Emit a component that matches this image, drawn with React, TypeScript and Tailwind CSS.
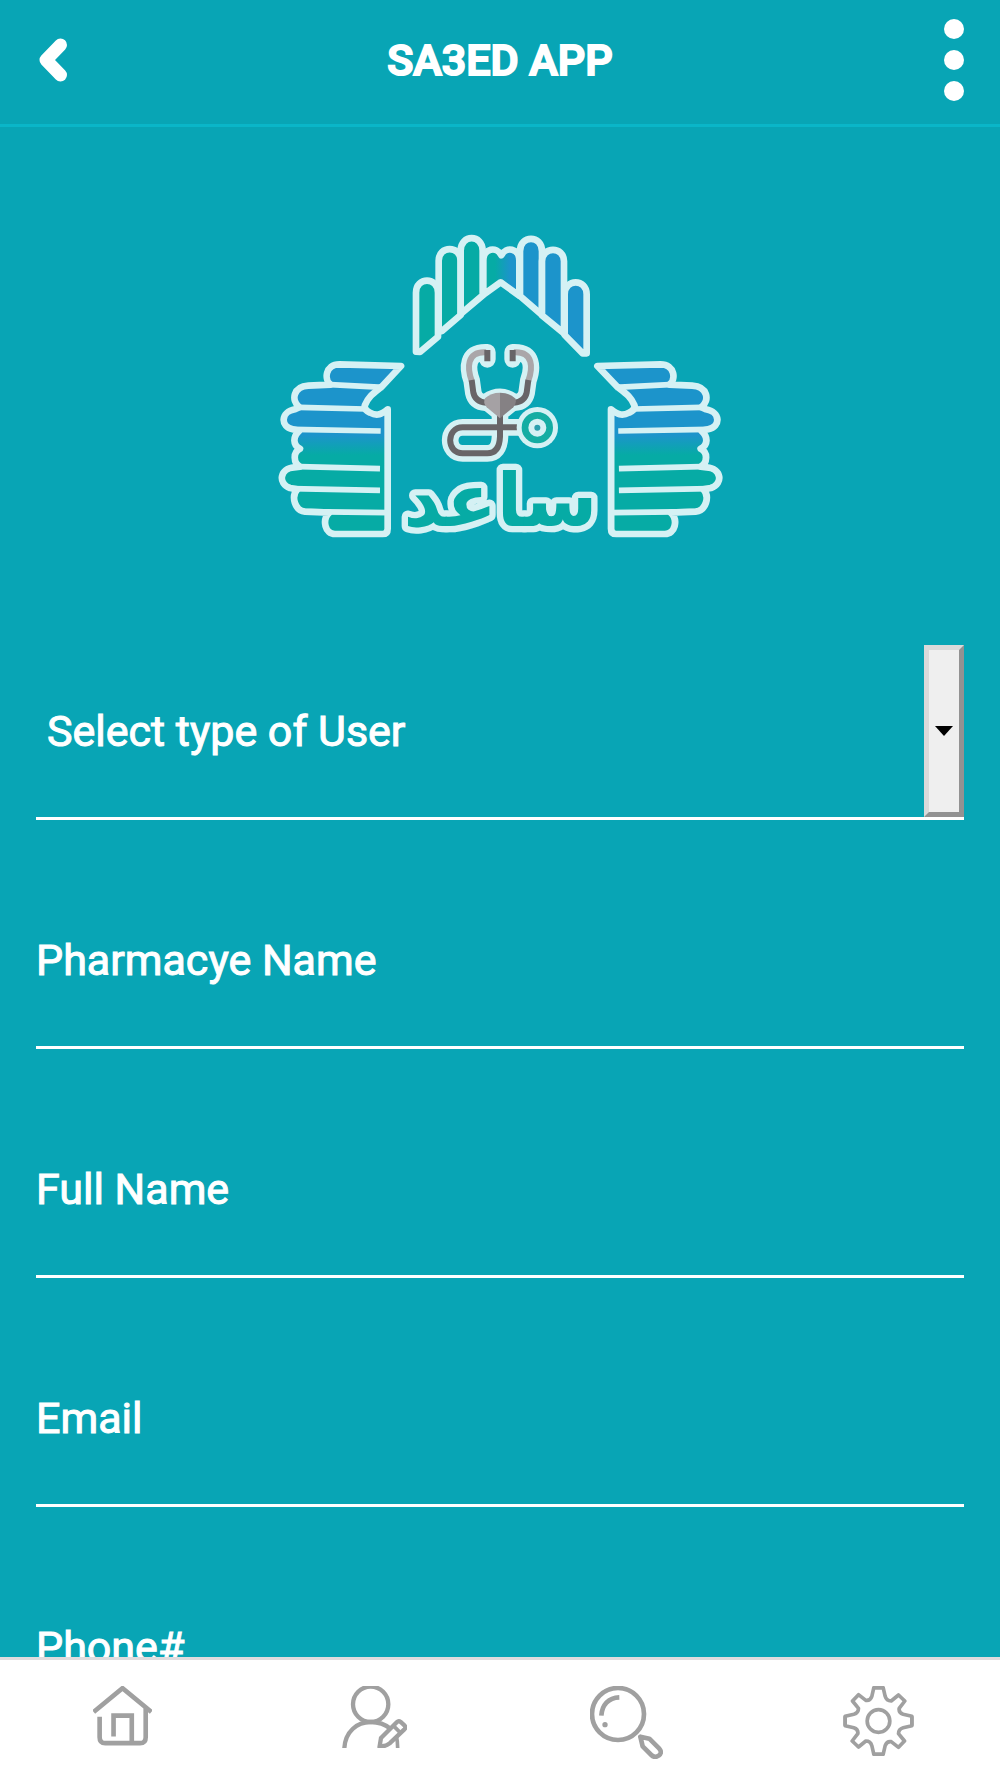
import { useState } from "react";

const fields = [
  { name: "pharmacy", label: "Pharmacye Name", type: "text" },
  { name: "fullName", label: "Full Name", type: "text" },
  { name: "email", label: "Email", type: "email" },
  { name: "phone", label: "Phone#", type: "tel" },
];

function Hand() {
  return (
    <g stroke="#d5f1f4" strokeWidth="20" strokeLinejoin="round" strokeLinecap="round">
      <path
        fill="url(#hand)"
        d="M393 438 L208 433 C165 433 162 480 182 494 L115 497 C70 500 62 540 88 562 L75 568 C32 575 30 620 68 628 L88 632 C68 650 68 675 90 686 C68 696 70 730 90 740 L72 742 C30 745 22 790 60 804 L82 808 C62 830 75 872 105 875 L178 878 C155 900 165 942 195 942 L338 942 Q353 942 353 926 L353 568 C335 582 322 590 300 578 Q280 568 285 555 C295 530 310 520 335 500 Z"
      />
      <path
        fill="none"
        strokeWidth="17"
        strokeLinecap="butt"
        d="M182 494 L340 502 M88 562 L285 567 M68 628 L332 633 M90 740 L330 746 M65 806 L330 811 M105 875 L353 878"
      />
    </g>
  );
}

function EarTube() {
  return (
    <g fill="none" strokeWidth="18">
      <path stroke="#aaa6a9" d="M168 67 C108 64 112 116 125 152" />
      <path stroke="#686568" d="M172 60 V94 M125 150 L130 188 Q136 216 168 218" />
    </g>
  );
}

function Logo() {
  return (
    <svg
      viewBox="24 42 1332 912"
      className="w-[444px] max-w-full overflow-visible"
      role="img"
      aria-label="Sa3ed logo"
    >
      <defs>
        <linearGradient id="hand" gradientUnits="userSpaceOnUse" x1="0" y1="645" x2="0" y2="705">
          <stop offset="0" stopColor="#1c94cb" />
          <stop offset="1" stopColor="#06aba5" />
        </linearGradient>
        <linearGradient id="roof" gradientUnits="userSpaceOnUse" x1="675" y1="0" x2="720" y2="0">
          <stop offset="0" stopColor="#06aba5" />
          <stop offset="1" stopColor="#1c94cb" />
        </linearGradient>
      </defs>

      <g fill="url(#roof)" stroke="#d5f1f4" strokeWidth="20" strokeLinejoin="round">
        <path d="M438 395 V218 C438 170 504 170 504 218 V350 L450 396 Z" />
        <path d="M506 335 V122 C506 76 572 76 572 122 V285 L516 333 Z" />
        <path d="M572 282 V92 C572 42 638 42 638 92 V226 Z" />
        <path d="M640 224 V122 C640 84 680 78 694 106 C708 78 748 84 748 122 V227 L692 187 Z" />
        <path d="M750 228 V94 C750 44 816 44 816 94 V285 Z" />
        <path d="M816 286 V124 C816 78 882 78 882 124 V340 Z" />
        <path d="M884 345 V223 C884 175 950 175 950 223 V400 L938 400 Z" />
      </g>

      <Hand />
      <g transform="translate(1384 0) scale(-1.022 1)">
        <Hand />
      </g>

      {/* stethoscope */}
      <g transform="translate(480 330)" strokeLinejoin="round">
        <g fill="none" stroke="#d5f1f4" strokeWidth="50" strokeLinecap="round">
          <path d="M172 88 V67 C108 64 112 116 125 152 L130 188 Q136 216 168 218" />
          <path d="M248 88 V67 C312 64 308 116 295 152 L290 188 Q284 216 252 218" />
          <path d="M210 262 V320 Q208 370 172 370 H98 C48 370 48 292 98 292 H280" />
          <path strokeWidth="28" fill="#d5f1f4" d="M165 205 Q210 175 255 205 L250 230 L210 262 L170 230 Z" />
        </g>
        <path fill="none" stroke="#686568" strokeWidth="18" d="M210 255 V320 Q208 370 172 370 H98 C48 370 48 292 98 292 H280" />
        <EarTube />
        <g transform="translate(420 0) scale(-1 1)">
          <EarTube />
        </g>
        <path fill="#a5a1a4" d="M210 188 Q182 188 165 205 Q158 218 170 232 L210 265 Z" />
        <path fill="#858184" d="M210 188 Q238 188 255 205 Q262 218 250 232 L210 265 Z" />
        <circle cx="322" cy="293" r="62" fill="#d5f1f4" />
        <circle cx="322" cy="293" r="37" fill="#d5f1f4" stroke="#14ada3" strokeWidth="20" />
        <circle cx="322" cy="293" r="9" fill="#2b9fae" />
      </g>

      <text
        x="691"
        y="918"
        textAnchor="middle"
        direction="rtl"
        className="font-['DejaVu_Sans',sans-serif] font-bold text-[222px]"
        fill="#06aba5"
        stroke="#d5f1f4"
        strokeWidth="38"
        strokeLinejoin="round"
        paintOrder="stroke"
      >
        ساعد
      </text>
    </svg>
  );
}

function HomeIcon() {
  return (
    <svg viewBox="278 258 178 180" width="59" height="60" fill="none" stroke="#a0a0a0" strokeWidth="14">
      <path d="M280 336 L367 264 L454 336 M437 322 V412 Q437 430 420 430 H315 Q298 430 298 412 V350" />
      <path d="M340 410 V347 H395 V430" />
    </svg>
  );
}

function UserEditIcon() {
  return (
    <svg viewBox="1023 258 195 186" width="65" height="62" fill="none" stroke="#a0a0a0" strokeWidth="13">
      <circle cx="1109" cy="313" r="53" />
      <path d="M1030 446 C1032 395 1068 366 1109 366 Q1144 366 1168 386" />
      <path d="M1136 438 L1140 414 L1188 366 Q1193 361 1199 366 L1211 377 Q1216 382 1210 388 L1166 430 Q1152 441 1136 438 Z" />
      <path d="M1176 376 L1200 400 M1186 408 Q1190 424 1190 444" strokeWidth="11" />
    </svg>
  );
}

function SearchIcon() {
  return (
    <svg viewBox="270 258 219 219" width="73" height="73" fill="none" stroke="#a0a0a0" strokeWidth="14">
      <circle cx="354" cy="342" r="78" />
      <path d="M304 347 C306 315 325 293 358 292" />
      <circle cx="315" cy="374" r="8" fill="#a0a0a0" stroke="none" />
      <path d="M421 410 L448 416 L478 446 Q488 458 476 467 Q464 475 454 465 L428 439 Z" strokeLinejoin="round" />
    </svg>
  );
}

function GearIcon() {
  const tooth = "M-14 -100 H14 L20 -74 Q24 -60 38 -60 L60 -78 L79 -60 L62 -38 Q60 -25 74 -20 L100 -14 V14";
  return (
    <svg viewBox="-106 -105 212 210" width="71" height="70" fill="none" stroke="#a0a0a0" strokeWidth="11" strokeLinejoin="round">
      <path d={tooth} />
      <path d={tooth} transform="rotate(90)" />
      <path d={tooth} transform="rotate(180)" />
      <path d={tooth} transform="rotate(270)" />
      <circle r="34" />
    </svg>
  );
}

function App() {
  const [userType, setUserType] = useState("");

  return (
    <div className="h-screen flex flex-col overflow-hidden bg-[#08a5b5] text-white font-[Roboto,sans-serif]">
      <header className="flex shrink-0 items-center justify-between h-[127px] px-9 pb-1 border-b-3 border-[#0ab6c8]">
        <button type="button" aria-label="Back" className="w-9 cursor-pointer">
          <svg viewBox="0 0 36 44" width="36" height="44" fill="none" stroke="currentColor" strokeWidth="13" strokeLinecap="round" strokeLinejoin="round">
            <path d="M24.5 7 L10 22 L24.5 37" />
          </svg>
        </button>
        <h1 className="text-[43px] font-medium [-webkit-text-stroke:2px_white]">SA3ED APP</h1>
        <button type="button" aria-label="Menu" className="w-9 flex flex-col items-end gap-[11px] cursor-pointer">
          <span className="size-5 rounded-full bg-white" />
          <span className="size-5 rounded-full bg-white" />
          <span className="size-5 rounded-full bg-white" />
        </button>
      </header>

      <main className="flex-1 min-h-0 overflow-y-auto [scrollbar-width:none] px-9">
        <div className="flex justify-center py-[107px]">
          <Logo />
        </div>

        <form className="flex flex-col gap-[54px] text-[43px] [-webkit-text-stroke:1px_white]">
          <div className="relative h-[175px] border-b-3 border-white">
            <select
              aria-label="Select type of User"
              value={userType}
              onChange={(e) => setUserType(e.target.value)}
              className="w-full h-full appearance-none bg-transparent pl-[11px] pr-12 outline-none"
            >
              <option value="">Select type of User</option>
              <option value="pharmacy">Pharmacy</option>
            </select>
            <span className="pointer-events-none absolute inset-y-0 right-0 w-10 flex items-center justify-center bg-[#efefef] border-5 border-t-[#dadada] border-l-[#dadada] border-r-[#929292] border-b-[#929292]">
              <svg viewBox="0 0 18 10" width="18" height="10">
                <path d="M0 0 H18 L9 10 Z" fill="#000" />
              </svg>
            </span>
          </div>

          {fields.map((field) => (
            <input
              key={field.name}
              name={field.name}
              type={field.type}
              aria-label={field.label}
              placeholder={field.label}
              className="w-full h-[175px] shrink-0 bg-transparent border-b-3 border-white outline-none placeholder:text-white placeholder:opacity-100"
            />
          ))}
        </form>
      </main>

      <footer className="shrink-0 h-[121px] bg-white border-t-3 border-[#dfdcde]">
        <nav className="-mx-1 grid grid-cols-4 justify-items-center items-start pt-[26px]">
          <a href="#home" aria-label="Home"><HomeIcon /></a>
          <a href="#profile" aria-label="Edit profile"><UserEditIcon /></a>
          <a href="#search" aria-label="Search"><SearchIcon /></a>
          <a href="#settings" aria-label="Settings"><GearIcon /></a>
        </nav>
      </footer>
    </div>
  );
}

export default App;
